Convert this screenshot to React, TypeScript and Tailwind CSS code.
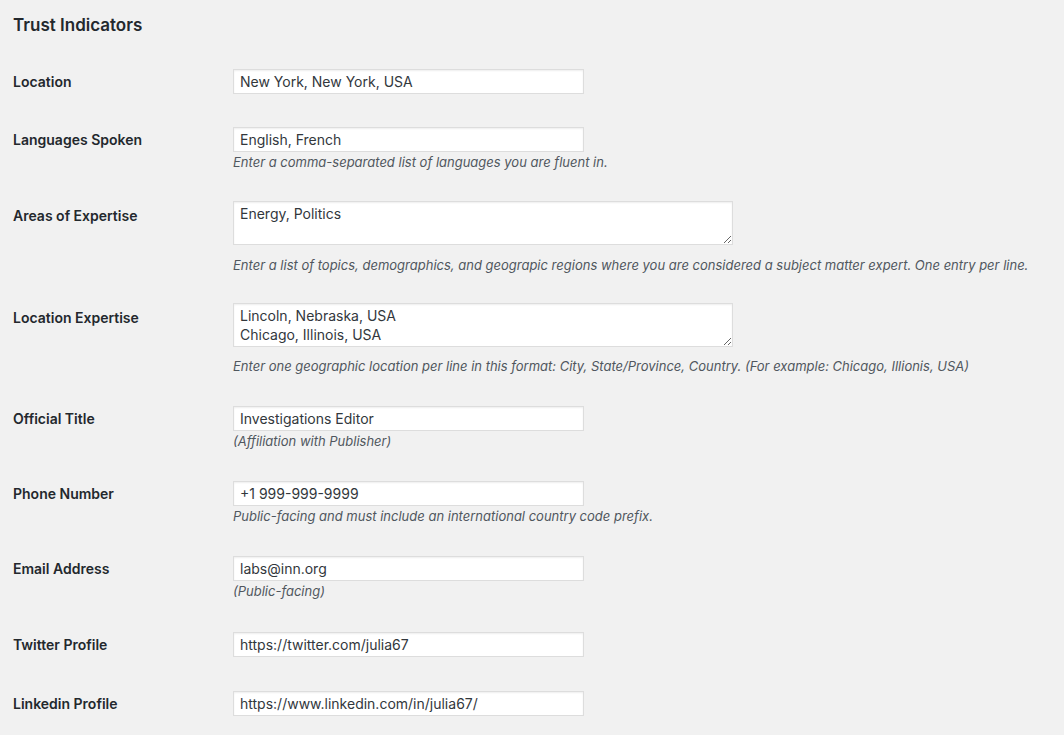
import React from "react";

const font = { fontFamily: "Inter, 'Noto Sans', sans-serif" };

function Label({ children }: { children: React.ReactNode }) {
  return (
    <div className="w-[220px] shrink-0 pl-[13px] pt-[3px] text-[14px] leading-[20px] font-semibold text-[#23282d]">
      {children}
    </div>
  );
}

function TextInput({ value }: { value: string }) {
  return (
    <input
      readOnly
      value={value}
      className="block w-[351px] h-[25px] border border-[#dddddd] bg-white px-[6px] text-[14px] text-[#32373c] shadow-[inset_0_1px_2px_rgba(0,0,0,0.07)] outline-none"
      style={font}
    />
  );
}

function Area({ value }: { value: string }) {
  return (
    <textarea
      readOnly
      value={value}
      className="block w-[500px] h-[44px] border border-[#dddddd] bg-white px-[6px] pt-[2px] text-[14px] leading-[19px] text-[#32373c] shadow-[inset_0_1px_2px_rgba(0,0,0,0.07)] outline-none overflow-hidden"
      style={font}
    />
  );
}

function Desc({ children, mt = "mt-[1px]" }: { children: React.ReactNode; mt?: string }) {
  return (
    <p className={`${mt} text-[13px] leading-[18px] italic text-[#50575e]`}>{children}</p>
  );
}

export default function App() {
  return (
    <div className="min-h-[735px] w-full bg-[#f1f1f1] text-[#23282d]" style={font}>
      <h2 className="pl-[13px] pt-[14px] text-[17px] leading-[23px] font-semibold text-[#23282d]">
        Trust Indicators
      </h2>
      <div className="mt-[32px] flex flex-col">
        <div className="flex items-start mb-[33px]">
          <Label>Location</Label>
          <div className="pl-[13px]">
            <TextInput value="New York, New York, USA" />
          </div>
        </div>
        <div className="flex items-start mb-[30px]">
          <Label>Languages Spoken</Label>
          <div className="pl-[13px]">
            <TextInput value="English, French" />
            <Desc>Enter a comma-separated list of languages you are fluent in.</Desc>
          </div>
        </div>
        <div className="flex items-start mb-[29px]">
          <div className="pt-[2px]">
            <Label>Areas of Expertise</Label>
          </div>
          <div className="pl-[13px]">
            <Area value="Energy, Politics" />
            <Desc mt="mt-[11px]">
              Enter a list of topics, demographics, and geograpic regions where you are considered a subject matter expert. One entry per line.
            </Desc>
          </div>
        </div>
        <div className="flex items-start mb-[31px]">
          <div className="pt-[2px]">
            <Label>Location Expertise</Label>
          </div>
          <div className="pl-[13px]">
            <Area value={"Lincoln, Nebraska, USA\nChicago, Illinois, USA"} />
            <Desc mt="mt-[10px]">
              Enter one geographic location per line in this format: City, State/Province, Country. (For example: Chicago, Illionis, USA)
            </Desc>
          </div>
        </div>
        <div className="flex items-start mb-[31px]">
          <Label>Official Title</Label>
          <div className="pl-[13px]">
            <TextInput value="Investigations Editor" />
            <Desc>(Affiliation with Publisher)</Desc>
          </div>
        </div>
        <div className="flex items-start mb-[31px]">
          <Label>Phone Number</Label>
          <div className="pl-[13px]">
            <TextInput value="+1 999-999-9999" />
            <Desc>Public-facing and must include an international country code prefix.</Desc>
          </div>
        </div>
        <div className="flex items-start mb-[32px]">
          <Label>Email Address</Label>
          <div className="pl-[13px]">
            <TextInput value="labs@inn.org" />
            <Desc>(Public-facing)</Desc>
          </div>
        </div>
        <div className="flex items-start mb-[34px]">
          <Label>Twitter Profile</Label>
          <div className="pl-[13px]">
            <TextInput value="https://twitter.com/julia67" />
          </div>
        </div>
        <div className="flex items-start">
          <Label>Linkedin Profile</Label>
          <div className="pl-[13px]">
            <TextInput value="https://www.linkedin.com/in/julia67/" />
          </div>
        </div>
      </div>
    </div>
  );
}
